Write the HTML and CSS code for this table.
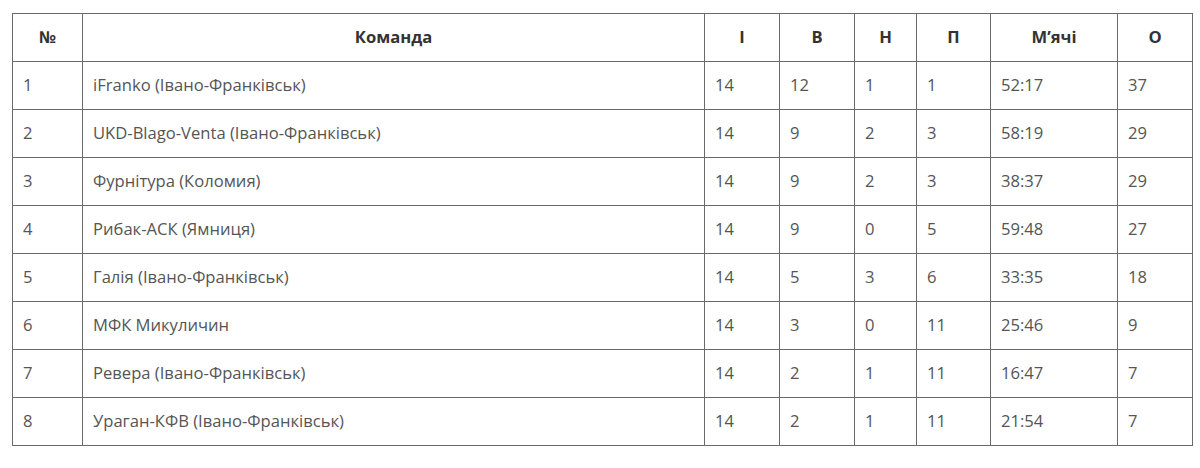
FILE: index.html
```html
<!DOCTYPE html>
<html lang="uk">
<head>
<meta charset="utf-8">
<link rel="stylesheet" href="styles.css">
</head>
<body>
<table class="standings">
<colgroup>
<col class="c-num"><col class="c-team"><col class="c-i"><col class="c-w"><col class="c-d"><col class="c-l"><col class="c-goals"><col class="c-pts">
</colgroup>
<thead>
<tr><th>№</th><th>Команда</th><th>І</th><th>В</th><th>Н</th><th>П</th><th>М’ячі</th><th>О</th></tr>
</thead>
<tbody>
<tr><td>1</td><td>iFranko (Івано-Франківськ)</td><td>14</td><td>12</td><td>1</td><td>1</td><td>52:17</td><td>37</td></tr>
<tr><td>2</td><td>UKD-Blago-Venta (Івано-Франківськ)</td><td>14</td><td>9</td><td>2</td><td>3</td><td>58:19</td><td>29</td></tr>
<tr><td>3</td><td>Фурнітура (Коломия)</td><td>14</td><td>9</td><td>2</td><td>3</td><td>38:37</td><td>29</td></tr>
<tr><td>4</td><td>Рибак-АСК (Ямниця)</td><td>14</td><td>9</td><td>0</td><td>5</td><td>59:48</td><td>27</td></tr>
<tr><td>5</td><td>Галія (Івано-Франківськ)</td><td>14</td><td>5</td><td>3</td><td>6</td><td>33:35</td><td>18</td></tr>
<tr><td>6</td><td>МФК Микуличин</td><td>14</td><td>3</td><td>0</td><td>11</td><td>25:46</td><td>9</td></tr>
<tr><td>7</td><td>Ревера (Івано-Франківськ)</td><td>14</td><td>2</td><td>1</td><td>11</td><td>16:47</td><td>7</td></tr>
<tr><td>8</td><td>Ураган-КФВ (Івано-Франківськ)</td><td>14</td><td>2</td><td>1</td><td>11</td><td>21:54</td><td>7</td></tr>
</tbody>
</table>
</body>
</html>
```
FILE: styles.css
```css
html, body {
  margin: 0;
  padding: 0;
  background: #fff;
}
body {
  padding: 13px 0 0 12px;
  font-family: "Open Sans", "Liberation Sans", sans-serif;
  font-size: 16.6px;
}
.standings {
  border-collapse: collapse;
  table-layout: fixed;
  width: 1181px;
}
.c-num { width: 70px; }
.c-team { width: 622px; }
.c-i { width: 75px; }
.c-w { width: 75px; }
.c-d { width: 62px; }
.c-l { width: 74px; }
.c-goals { width: 127px; }
.c-pts { width: 75px; }
.standings th,
.standings td {
  border: 1px solid #6a6a6a;
  height: 47px;
  padding: 0 10px 2px;
  box-sizing: border-box;
  vertical-align: middle;
}
.standings tr { height: 48px; }
.standings th {
  font-weight: 700;
  color: #333;
  text-align: center;
}
.standings td {
  color: #555;
  text-align: left;
}
```
